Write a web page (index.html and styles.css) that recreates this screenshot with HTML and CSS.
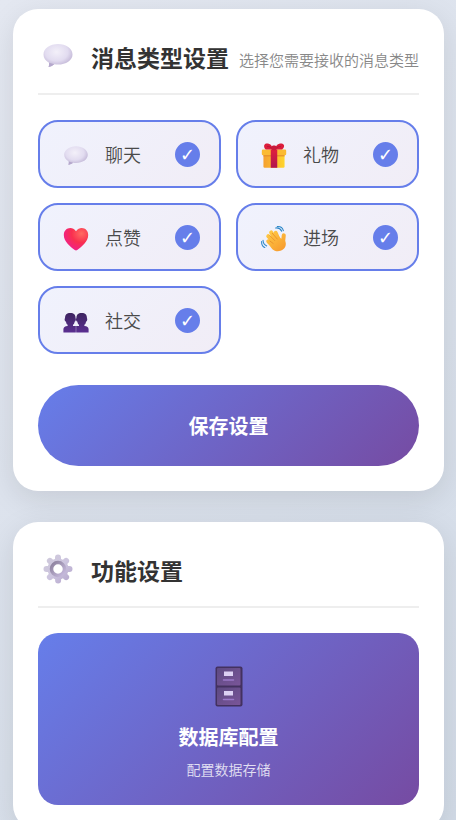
FILE: index.html
```html
<!DOCTYPE html>
<html lang="zh-CN">

<head>
<meta charset="UTF-8">
<meta name="viewport" content="width=device-width, initial-scale=1.0">
<title>功能设置</title>
<link rel="stylesheet" href="styles.css">
</head>

<body>

    <!-- 公用渐变和图标 -->
    <svg class="defs" width="0" height="0" aria-hidden="true">
        <defs>
            <radialGradient id="bubble-fill" cx="0.45" cy="0.35" r="0.65">
                <stop offset="0" stop-color="#f3f0f9"/>
                <stop offset="0.6" stop-color="#e2dcf0"/>
                <stop offset="1" stop-color="#bdb1d2"/>
            </radialGradient>
            <radialGradient id="heart-fill" cx="0.72" cy="0.25" r="0.8">
                <stop offset="0" stop-color="#ff6b62"/>
                <stop offset="0.5" stop-color="#f9304f"/>
                <stop offset="1" stop-color="#f0208a"/>
            </radialGradient>
            <linearGradient id="box-fill" x1="0" y1="0" x2="1" y2="0">
                <stop offset="0" stop-color="#f5a030"/>
                <stop offset="1" stop-color="#ffd52e"/>
            </linearGradient>
            <linearGradient id="ribbon-fill" x1="0" y1="0" x2="0" y2="1">
                <stop offset="0" stop-color="#e0203c"/>
                <stop offset="1" stop-color="#b01550"/>
            </linearGradient>
            <linearGradient id="hand-fill" gradientUnits="userSpaceOnUse" x1="8" y1="6" x2="28" y2="30">
                <stop offset="0" stop-color="#ffcc45"/>
                <stop offset="1" stop-color="#f79a2e"/>
            </linearGradient>
            <linearGradient id="people-fill" x1="0" y1="0" x2="0" y2="1">
                <stop offset="0" stop-color="#3d2460"/>
                <stop offset="1" stop-color="#5b2f92"/>
            </linearGradient>
            <linearGradient id="gear-fill" gradientUnits="userSpaceOnUse" x1="2" y1="2" x2="30" y2="30">
                <stop offset="0" stop-color="#cfcada"/>
                <stop offset="0.5" stop-color="#cdc5df"/>
                <stop offset="1" stop-color="#b3a4cb"/>
            </linearGradient>
            <linearGradient id="gear-ring" x1="0" y1="0" x2="1" y2="1">
                <stop offset="0" stop-color="#8b809b"/>
                <stop offset="1" stop-color="#c9bce0"/>
            </linearGradient>
            <linearGradient id="drawer-fill" x1="0" y1="0" x2="1" y2="1">
                <stop offset="0" stop-color="#5d4a82"/>
                <stop offset="1" stop-color="#7a5599"/>
            </linearGradient>
            <symbol id="bubble" viewBox="0 0 32 32">
                <path d="M16 4C8 4 1.500 8.500 1.500 14.500c0 3.500 2 6.300 5.500 8.200.4 1.400.1 2.600-.4 4.200 2.400-.2 4.300-1.500 5.700-2.600 1.200.2 2.400.3 3.700.3 8 0 14.500-4.200 14.500-10.100S24 4 16 4z" fill="url(#bubble-fill)"/>
                <path d="M7 22.700c.4 1.400.1 2.600-.4 4.200 2.400-.2 4.300-1.500 5.700-2.600z" fill="#b5a8cc"/>
            </symbol>
        </defs>
    </svg>

    <main class="page">

        <section class="card">
            <header class="card-header">
                <svg class="header-icon" aria-hidden="true"><use href="#bubble"/></svg>
                <h2>消息类型设置</h2>
                <span class="subtitle">选择您需要接收的消息类型</span>
            </header>

            <form class="message-form">
                <div class="type-grid">
                    <label class="type-item" for="chat">
                        <svg class="type-icon" aria-hidden="true"><use href="#bubble"/></svg>
                        <span class="type-name">聊天</span>
                        <input type="checkbox" id="chat" checked>
                    </label>
                    <label class="type-item" for="gift">
                        <svg class="type-icon" viewBox="0 0 32 32" aria-hidden="true">
                            <path d="M3 12h26v17a1.500 1.500 0 0 1-1.500 1.500h-23A1.500 1.500 0 0 1 3 29z" fill="url(#box-fill)"/>
                            <rect x="1" y="8" width="30" height="7" rx="1.500" fill="#fbbb32"/>
                            <path d="M3 15h26v1.500H3z" fill="#e58f2c"/>
                            <path d="M12 8h8v22.500h-8z" fill="url(#ribbon-fill)"/>
                            <path d="M15 8C14 2 9 -.500 5.500 1 2.500 3 4 7 6 8zM17 8c1-6 6-8.500 9.500-7s1.500 6-.500 7z" fill="#dc1d3b"/>
                            <path d="M14.500 7.500C12 5 10 4 7.500 4.500M17.500 7.500C20 5 22 4 24.500 4.500" fill="none" stroke="#a91340" stroke-width="1"/>
                            <rect x="13" y="3" width="6" height="6" rx="2" fill="#c71b3c"/>
                        </svg>
                        <span class="type-name">礼物</span>
                        <input type="checkbox" id="gift" checked>
                    </label>
                    <label class="type-item" for="like">
                        <svg class="type-icon" viewBox="0 0 32 32" aria-hidden="true">
                            <path d="M16 6.500C14 3.500 11.500 2.500 9 2.500c-4.500 0-8 3.500-8 8.500 0 8 8 14.500 13.500 18.500q1.500 1 3 0C23 25.500 31 19 31 11c0-5-3.500-8.500-8-8.500-2.500 0-5 1-7 4z" fill="url(#heart-fill)"/>
                        </svg>
                        <span class="type-name">点赞</span>
                        <input type="checkbox" id="like" checked>
                    </label>
                    <label class="type-item" for="enter">
                        <svg class="type-icon" viewBox="0 0 32 32" aria-hidden="true">
                            <g fill="none" stroke="url(#hand-fill)" stroke-linecap="round" stroke-width="5">
                                <path d="M19 22L9 12.500"/>
                                <path d="M20 20L12.500 8"/>
                                <path d="M22 18L18 8.500"/>
                                <path d="M18 26L9 19"/>
                                <path d="M27 21L28 11.500"/>
                            </g>
                            <path d="M10 14L19 9l6 7 3-3 2.500 8q.500 5-3.500 8c-4 3-10 2.500-13-.500L8 21z" fill="url(#hand-fill)"/>
                            <path d="M11 12l6 6M14 9l6 7M11 18.500l4 3" fill="none" stroke="#e58c2b" stroke-width="1" stroke-linecap="round"/>
                            <path d="M18 2.500q5-1 7.500 4M20 .700q6-.500 7.500 5M2.500 17.500q0 5 4.500 7M.700 19q0 6 4 7.500" fill="none" stroke="#2a86c8" stroke-width="1.300" stroke-linecap="round"/>
                        </svg>
                        <span class="type-name">进场</span>
                        <input type="checkbox" id="enter" checked>
                    </label>
                    <label class="type-item" for="social">
                        <svg class="type-icon" viewBox="0 0 32 32" aria-hidden="true">
                            <g fill="url(#people-fill)">
                                <path d="M2.500 11.500C2.500 7 4.500 5 9 5s6.500 2 6.500 6.500q.700.500.200 2.200T14.500 15.500q-.500 3-2.200 4v1.500H15.800V29H.500v-4q0-3.500 5.200-4v-1.500q-1.700-1-2.200-4-1 0-1.400-1.800t.400-2.200z"/>
                                <path d="M16.500 11.500C16.500 7 18.500 5 23 5s6.500 2 6.500 6.500q.700.500.200 2.200T28.500 15.500q-.500 3-2.200 4v1.500q5.200.500 5.200 4v4H16.200v-8h3.500v-1.500q-1.700-1-2.200-4-1 0-1.400-1.800t.400-2.200z"/>
                            </g>
                        </svg>
                        <span class="type-name">社交</span>
                        <input type="checkbox" id="social" checked>
                    </label>
                </div>
                <button type="button" class="save-btn">保存设置</button>
            </form>
        </section>

        <section class="card">
            <header class="card-header">
                <svg class="header-icon" viewBox="0 0 32 32" aria-hidden="true">
                    <g stroke="url(#gear-fill)" stroke-width="6" stroke-linecap="round">
                        <path d="M16 4.500L16.100 27.500M4.500 16L27.500 16.100M7.900 7.900L24.100 24.100M24.100 7.900L7.900 24.100"/>
                    </g>
                    <circle cx="16" cy="16" r="10.500" fill="url(#gear-fill)"/>
                    <circle cx="16" cy="16" r="6.500" fill="#fff" stroke="url(#gear-ring)" stroke-width="3.500"/>
                </svg>
                <h2>功能设置</h2>
            </header>

            <div class="feature-list">
                <button type="button" class="feature-btn">
                    <svg class="feature-icon" viewBox="0 0 28 42" aria-hidden="true">
                        <rect x="0.500" y="0.500" width="27" height="40" rx="2" fill="#43315f"/>
                        <rect x="2" y="2" width="23.500" height="17.500" rx="1" fill="url(#drawer-fill)"/>
                        <rect x="2" y="21.500" width="23.500" height="17.500" rx="1" fill="url(#drawer-fill)"/>
                        <path d="M9 5.500h9v4.500H9zM9 25h9v4.500H9z" fill="#dcd0f3"/>
                        <path d="M8.500 14h10M8.500 33.500h10" stroke="#9b78c8" stroke-width="1.500" stroke-linecap="round"/>
                    </svg>
                    <span class="feature-title">数据库配置</span>
                    <span class="feature-desc">配置数据存储</span>
                </button>
            </div>
        </section>

    </main>

</body>

</html>
```
FILE: styles.css
```css
* {
    box-sizing: border-box;
    margin: 0;
    padding: 0;
}

body {
    font-family: "Noto Sans CJK SC", sans-serif;
    height: 100vh;
    overflow: hidden;
    color: #333;
    background: linear-gradient(135deg, #e4e8f1 0%, #d2dbe7 100%);
}

.defs {
    position: absolute;
}

.page {
    display: flex;
    flex-direction: column;
    gap: 31px;
    padding: 9px 12px 9px 13px;
}

.card {
    padding: 25px;
    background: #fff;
    border-radius: 25px;
    box-shadow: 0 8px 30px rgba(0, 0, 0, 0.1);
}

.card-header {
    display: flex;
    align-items: center;
    height: 61px;
    padding-bottom: 14px;
    margin-bottom: 25px;
    border-bottom: 2px solid #eee;
}

.header-icon {
    flex: none;
    width: 32px;
    height: 32px;
    margin: 0 17px 2px 4px;
}

.card-header h2 {
    font-size: 23px;
    font-weight: 700;
    line-height: 36px;
    white-space: nowrap;
}

.subtitle {
    margin-left: auto;
    padding-top: 5px;
    font-size: 15px;
    font-weight: 350;
    color: #888;
    white-space: nowrap;
}

.type-grid {
    display: grid;
    grid-template-columns: 1fr 1fr;
    gap: 15px;
    margin-bottom: 31px;
}

.type-item {
    display: flex;
    align-items: center;
    height: 68px;
    padding: 0 19px;
    border: 2px solid #667eea;
    border-radius: 20px;
    background: linear-gradient(135deg, #f0f2fd 0%, #f1edf6 100%);
    cursor: pointer;
}

.type-icon {
    flex: none;
    width: 26px;
    height: 26px;
    margin: 3px 16px 0 4px;
}

.type-name {
    flex: 1;
    font-size: 18px;
    font-weight: 350;
    color: #4a4a4a;
}

.type-item input {
    appearance: none;
    display: flex;
    align-items: center;
    justify-content: center;
    width: 25px;
    height: 25px;
    border: 2px solid #ccc;
    border-radius: 50%;
    cursor: pointer;
}

.type-item input:checked {
    border-color: #667eea;
    background: #667eea;
}

.type-item input:checked::after {
    content: "✓";
    font-family: "DejaVu Sans", sans-serif;
    font-size: 18px;
    line-height: 21px;
    color: #fff;
}

.save-btn {
    display: block;
    width: 100%;
    height: 81px;
    border: none;
    border-radius: 41px;
    background: linear-gradient(135deg, #667eea 0%, #764ba2 100%);
    color: #fff;
    font-family: inherit;
    font-size: 20px;
    font-weight: 700;
    cursor: pointer;
}

.feature-list {
    display: grid;
    gap: 15px;
}

.feature-btn {
    display: flex;
    flex-direction: column;
    align-items: center;
    padding: 33px 20px 24px;
    border: none;
    border-radius: 20px;
    background: linear-gradient(135deg, #667eea 0%, #764ba2 100%);
    color: #fff;
    font-family: inherit;
    cursor: pointer;
}

.feature-icon {
    width: 28px;
    height: 42px;
    margin-bottom: 14px;
}

.feature-title {
    margin-bottom: 5px;
    font-size: 20px;
    font-weight: 700;
    line-height: 30px;
}

.feature-desc {
    font-size: 14px;
    font-weight: 350;
    line-height: 24px;
    opacity: 0.8;
}
```
